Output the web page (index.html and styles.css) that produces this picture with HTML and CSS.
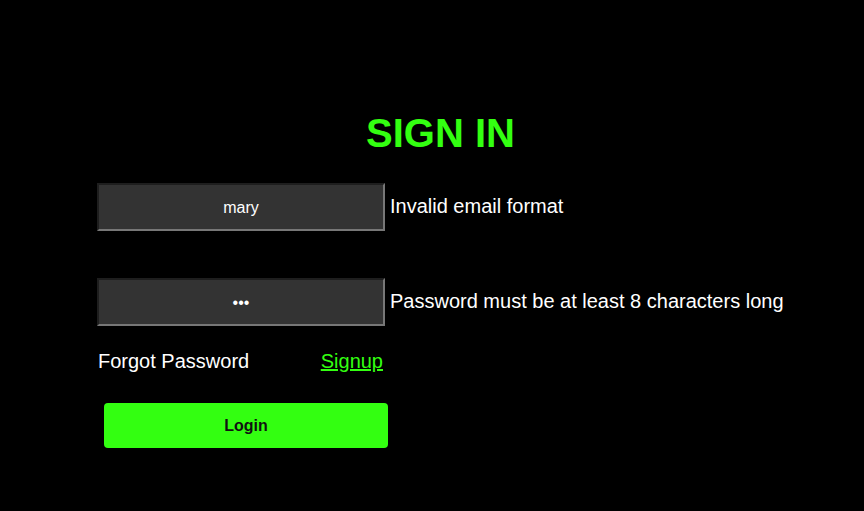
FILE: index.html
```html
<!DOCTYPE html>
<html>
<head>
<meta charset="utf-8">
<link rel="stylesheet" href="styles.css">
</head>
<body>
<div class="page">
  <h1 class="title">SIGN IN</h1>
  <div class="field-row">
    <input class="field" type="text" value="mary">
    <span class="error">Invalid email format</span>
  </div>
  <div class="field-row second">
    <input class="field" type="password" value="abc">
    <span class="error">Password must be at least 8 characters long</span>
  </div>
  <div class="links">
    <span class="forgot">Forgot Password</span>
    <a class="signup" href="#">Signup</a>
  </div>
  <button class="login">Login</button>
</div>
</body>
</html>
```
FILE: styles.css
```css
html, body {
  margin: 0;
  background: #000;
  font-family: "Liberation Sans", Arial, sans-serif;
}
.page {
  padding: 110px 0 0 97px;
}
.title {
  width: 687px;
  margin: 0;
  text-align: center;
  font-size: 40px;
  line-height: 46px;
  font-weight: bold;
  color: #33ff11;
}
.field-row {
  display: flex;
  align-items: center;
  gap: 5px;
  margin-top: 27px;
}
.field-row.second {
  margin-top: 47px;
}
.field {
  box-sizing: border-box;
  width: 288px;
  height: 48px;
  margin: 0;
  padding: 2px 8px 0;
  background: #333;
  color: #fff;
  border: 2px solid;
  border-color: #1e1e1e #777 #777 #1e1e1e;
  text-align: center;
  font-family: "Liberation Sans", Arial, sans-serif;
  font-size: 16px;
  outline: none;
}
.error {
  color: #fff;
  font-size: 20px;
  line-height: 23px;
  margin-top: -2px;
}
.links {
  display: flex;
  justify-content: space-between;
  width: 285px;
  margin-top: 24px;
  padding-left: 1px;
  font-size: 20px;
  line-height: 23px;
}
.forgot {
  color: #fff;
}
.signup {
  color: #33ff11;
  text-decoration: underline;
}
.login {
  display: block;
  width: 284px;
  height: 45px;
  margin: 30px 0 0 7px;
  border: none;
  border-radius: 4px;
  background: #33ff11;
  color: #111;
  font-family: "Liberation Sans", Arial, sans-serif;
  font-size: 16px;
  font-weight: bold;
}
```
